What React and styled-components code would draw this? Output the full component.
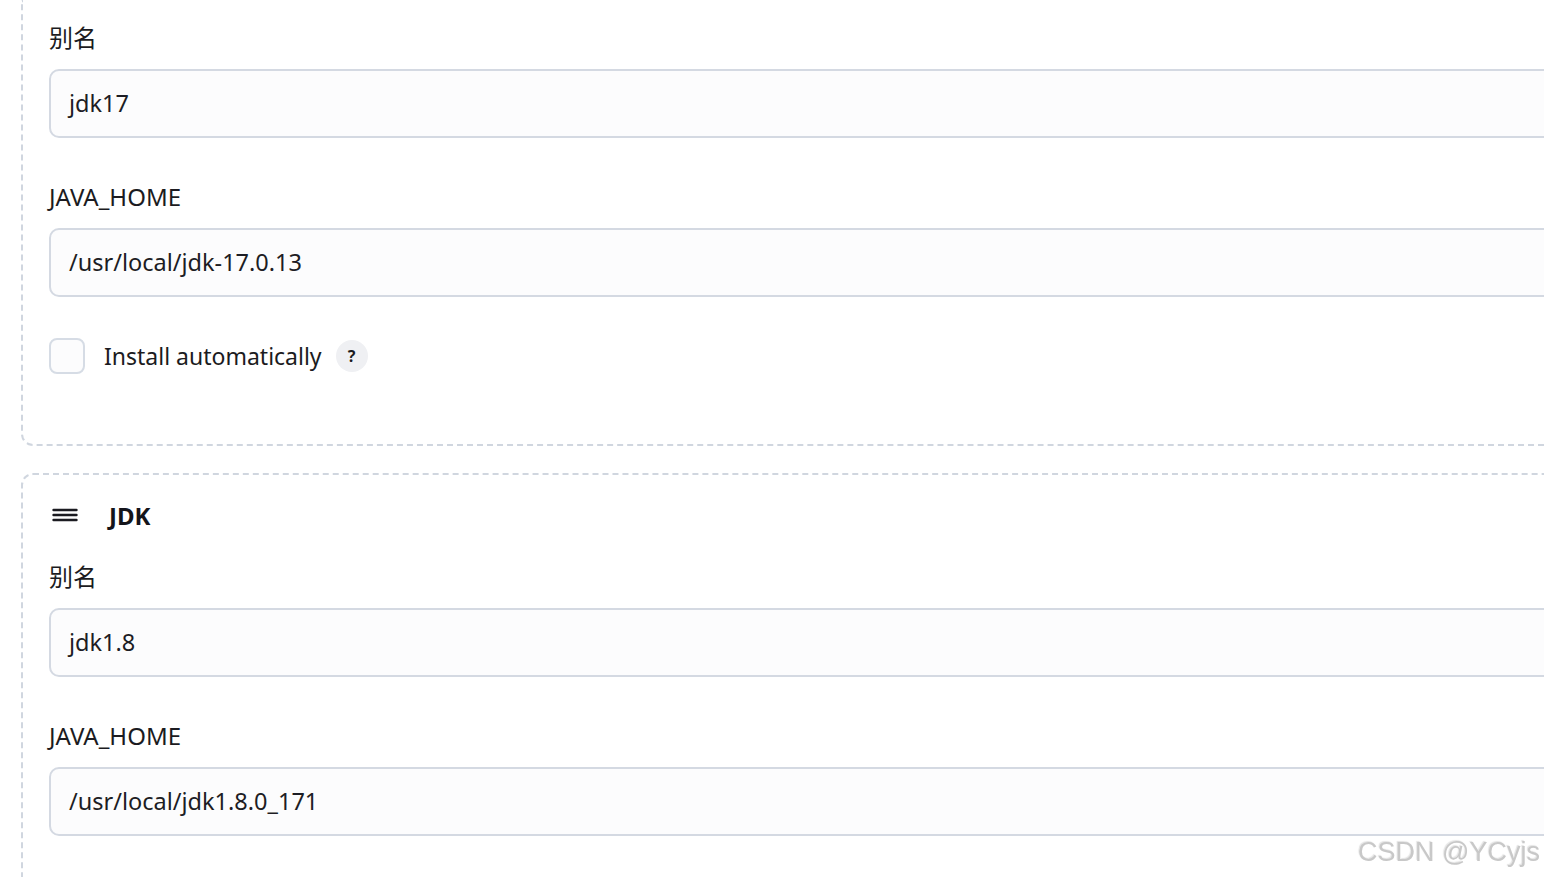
import styled, { createGlobalStyle } from "styled-components";

const Global = createGlobalStyle`
  html, body {
    margin: 0;
    padding: 0;
    overflow: hidden;
    background: #ffffff;
  }
  body {
    font-family: "Noto Sans", "Noto Sans CJK SC", sans-serif;
    color: #1b1b21;
  }
`;

const Page = styled.div`
  width: 1700px;
  height: 877px;
  padding-left: 21px;
  box-sizing: border-box;
`;

const Card = styled.section`
  border: 2px dashed #d0d6df;
  border-top: ${(p) => (p.$cut ? "none" : "2px dashed #d0d6df")};
  border-radius: ${(p) => (p.$cut ? "0 0 12px 12px" : "12px")};
  padding: ${(p) => (p.$cut ? "22px 26px 70px" : "23px 26px 120px")};
  margin-bottom: 27px;
`;

const Heading = styled.div`
  display: flex;
  align-items: center;
  gap: 31px;
  height: 34px;
  margin-bottom: 29px;
  padding-left: 3px;
  font-size: 24px;
  font-weight: 700;
  color: #14141b;
`;

const Field = styled.div`
  margin-bottom: 43px;
`;

const Label = styled.div`
  font-size: 24px;
  line-height: 32px;
  margin-bottom: 15px;
  color: #1b1b21;
`;

const Input = styled.div`
  height: 69px;
  box-sizing: border-box;
  border: 2px solid #d4d9e2;
  border-radius: 10px;
  background: #fcfcfd;
  display: flex;
  align-items: center;
  padding: 0 0 2px 18px;
  font-size: 23.5px;
  color: #1d1d24;
`;

const CheckRow = styled.div`
  display: flex;
  align-items: center;
  height: 36px;
  margin-top: -2px;
  font-size: 23px;
`;

const Box = styled.span`
  width: 36px;
  height: 36px;
  box-sizing: border-box;
  border: 2px solid #d6dce5;
  border-radius: 8px;
  background: #fcfcfd;
  margin-right: 19px;
`;

const Help = styled.span`
  width: 32px;
  height: 32px;
  border-radius: 50%;
  background: #eff0f3;
  display: inline-flex;
  align-items: center;
  justify-content: center;
  font-size: 16px;
  font-weight: 700;
  margin-left: 14px;
  color: #1b1b21;
`;

const Watermark = styled.div`
  position: fixed;
  right: 4px;
  bottom: 9px;
  font-family: "Liberation Sans", Arial, sans-serif;
  font-size: 27px;
  color: #c8c8c8;
  text-shadow: 1px 1px 1px #ffffff, -1px -1px 1px #e4e4e4;
`;

function Menu() {
  return (
    <svg width="26" height="14" viewBox="0 0 26 14">
      <g stroke="#1b1b21" strokeWidth="2.4" strokeLinecap="round">
        <line x1="1.5" y1="2" x2="24.5" y2="2" />
        <line x1="1.5" y1="7" x2="24.5" y2="7" />
        <line x1="1.5" y1="12" x2="24.5" y2="12" />
      </g>
    </svg>
  );
}

function TextField({ label, value }) {
  return (
    <Field>
      <Label>{label}</Label>
      <Input>{value}</Input>
    </Field>
  );
}

export default function App() {
  return (
    <Page>
      <Global />
      <Card $cut>
        <TextField label="别名" value="jdk17" />
        <TextField label="JAVA_HOME" value="/usr/local/jdk-17.0.13" />
        <CheckRow>
          <Box />
          Install automatically
          <Help>?</Help>
        </CheckRow>
      </Card>
      <Card>
        <Heading>
          <Menu />
          JDK
        </Heading>
        <TextField label="别名" value="jdk1.8" />
        <TextField label="JAVA_HOME" value="/usr/local/jdk1.8.0_171" />
      </Card>
      <Watermark>CSDN @YCyjs</Watermark>
    </Page>
  );
}
